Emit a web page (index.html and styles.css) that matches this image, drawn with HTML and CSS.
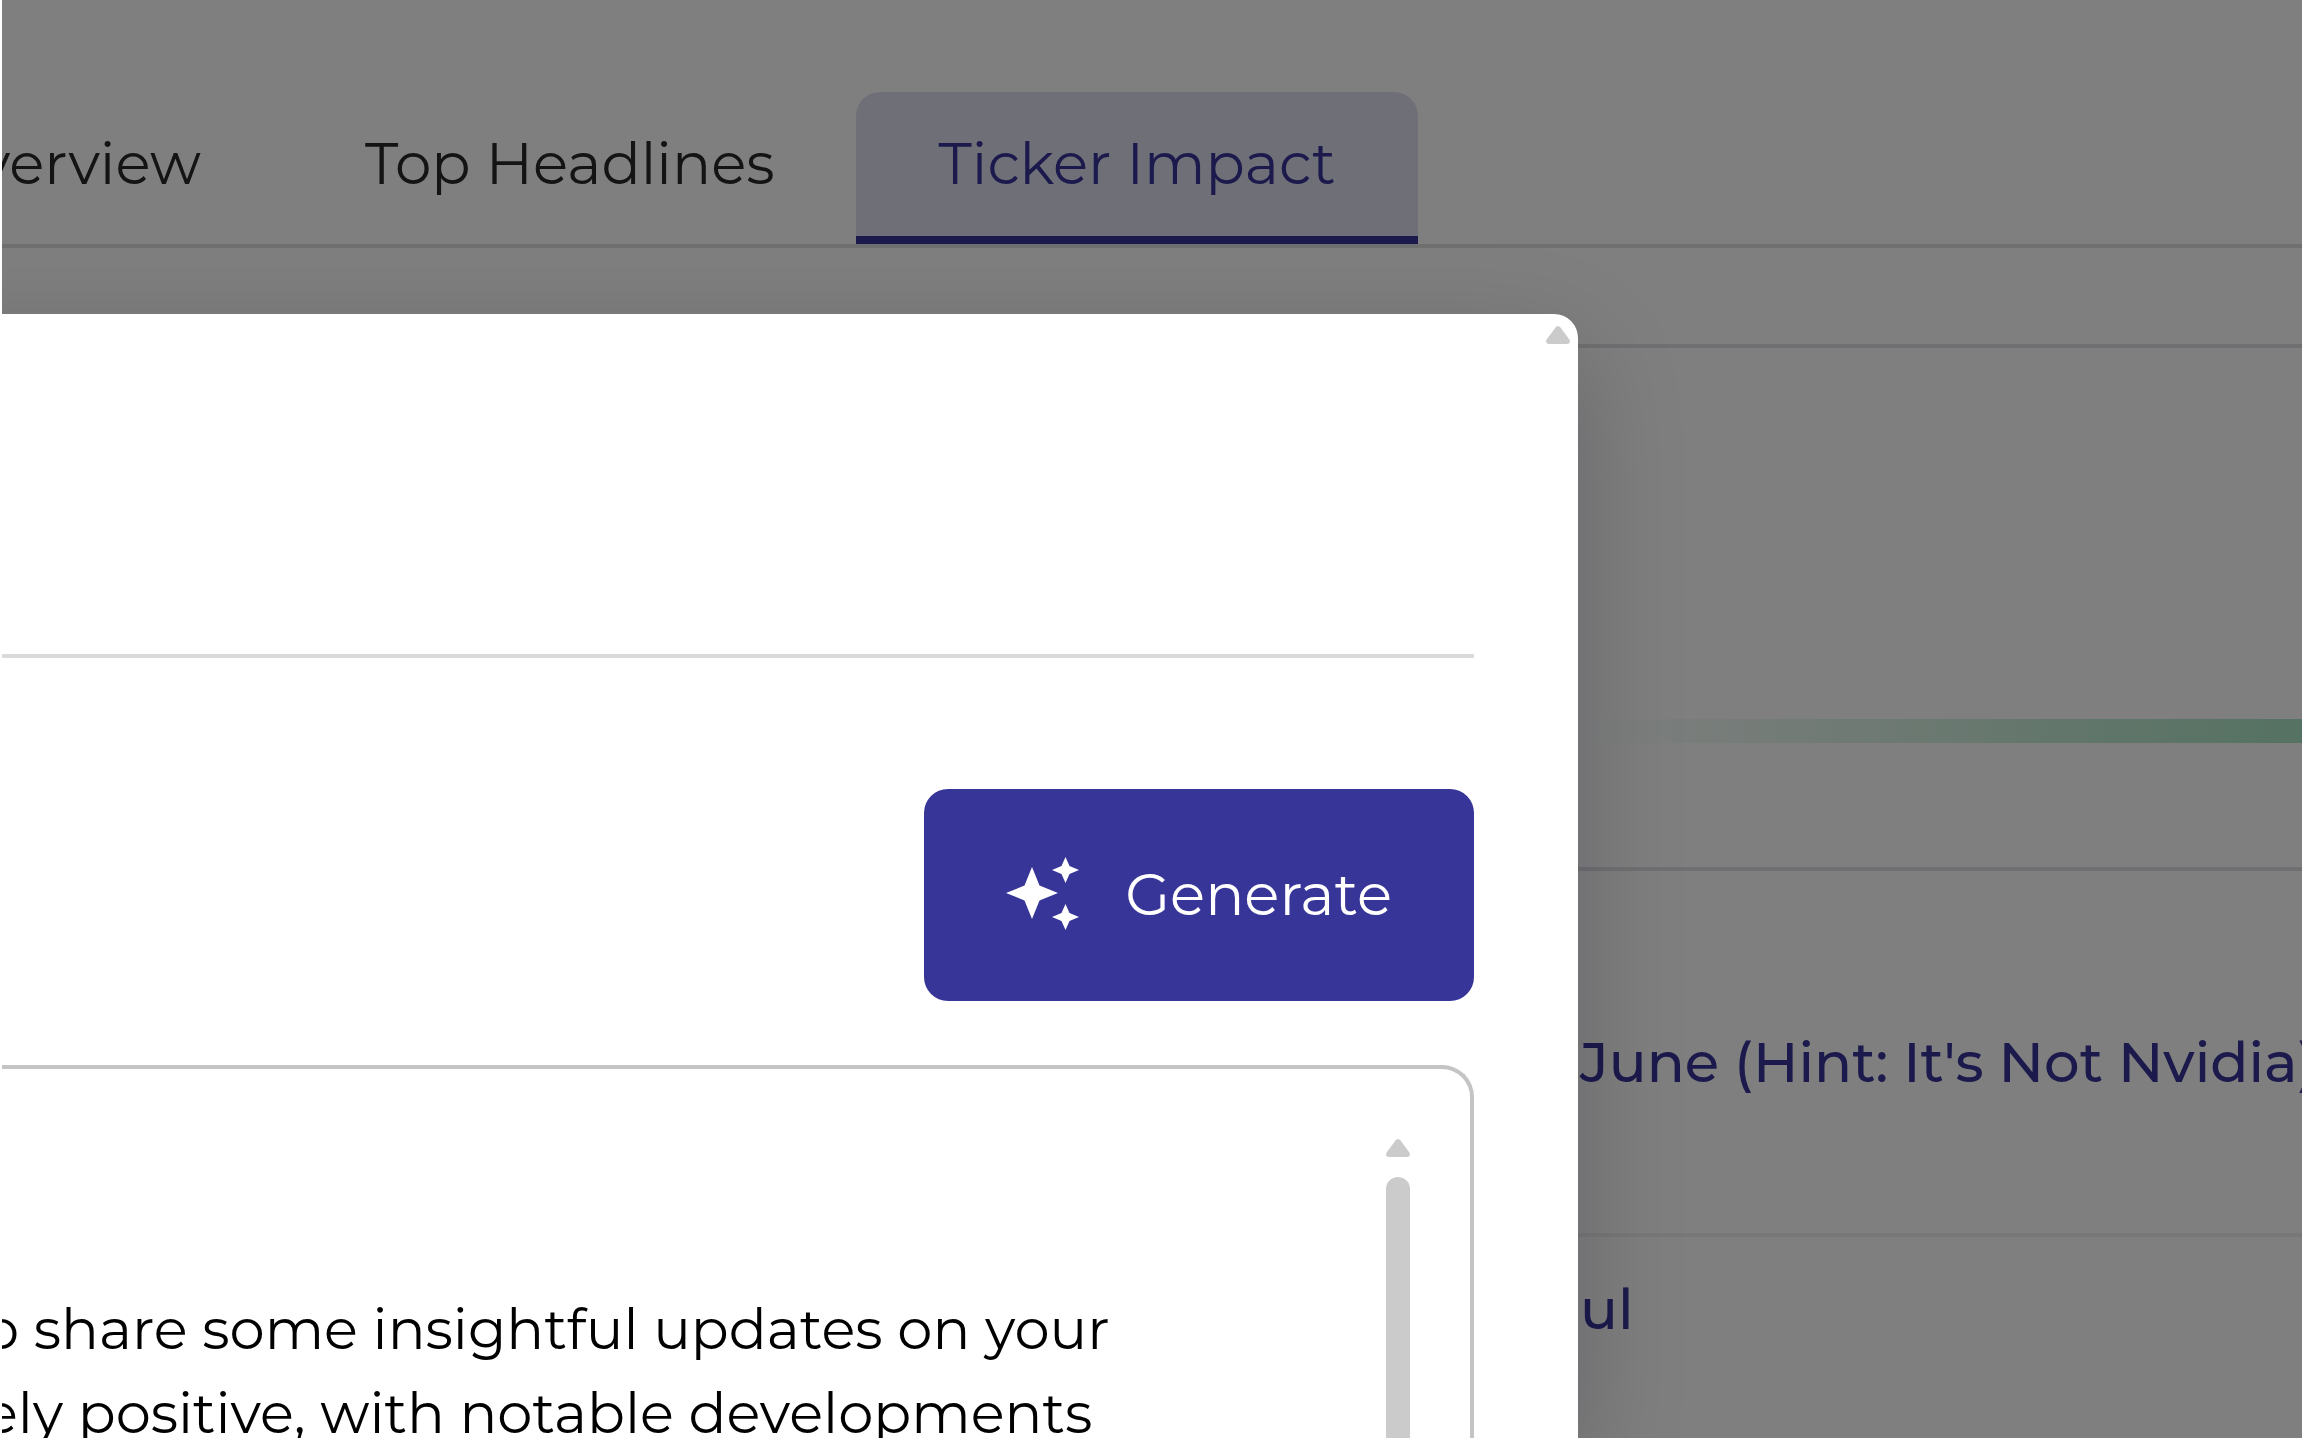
FILE: index.html
```html
<!DOCTYPE html>
<html lang="en">
  <head>
    <meta charset="UTF-8" />
    <meta name="viewport" content="width=device-width, initial-scale=1.0" />
    <title>Ticker Impact</title>
    <link rel="stylesheet" href="styles.css">
  </head>
  <body>
    <div class="app">
      <nav class="tabs">
        <button type="button" class="tab">Overview</button>
        <button type="button" class="tab">Top Headlines</button>
        <button type="button" class="tab active">Ticker Impact</button>
      </nav>

      <main class="panel">
        <div class="impact">
          <div class="impact-bar"></div>
        </div>
        <ul class="headlines">
          <li><a href="#">June (Hint: It's Not Nvidia)</a></li>
          <li><a href="#">ul</a></li>
        </ul>
      </main>

      <div class="backdrop">
        <section class="modal" role="dialog" aria-modal="true">
          <svg class="arrow modal-arrow" viewBox="0 0 24 18"><path d="M9.5 1.5Q12 -1.5 14.5 1.5L23.4 13.6Q25 17.6 21 18H3Q-1 17.6 .6 13.6Z"/></svg>

          <header class="modal-header"></header>

          <div class="actions">
            <button type="button" class="generate">
              <svg class="sparkles" viewBox="0 0 73 77">
                <path d="M26 10L33.5 28.5L52 36L33.5 43.5L26 62L18.5 43.5L0 36L18.5 28.5Z"/>
                <path d="M59.5 0L63.5 9L73 13L63.5 17L59.5 26L55.5 17L46 13L55.5 9Z"/>
                <path d="M59.5 47L63.5 56L73 60L63.5 64L59.5 73L55.5 64L46 60L55.5 56Z"/>
              </svg>
              Generate
            </button>
          </div>

          <div class="message">
            <p>o share some insightful updates on your<br>ely positive, with notable developments</p>
            <div class="scrollbar">
              <svg class="arrow" viewBox="0 0 24 18"><path d="M9.5 1.5Q12 -1.5 14.5 1.5L23.4 13.6Q25 17.6 21 18H3Q-1 17.6 .6 13.6Z"/></svg>
              <div class="thumb"></div>
            </div>
          </div>
        </section>
      </div>
    </div>
  </body>
</html>
```
FILE: styles.css
```css
* {
  box-sizing: border-box;
  margin: 0;
  padding: 0;
}

:root {
  --side: 724px;
  --primary: #383598;
}

body {
  background-color: #fff;
  font-family: Montserrat, Inter, sans-serif;
  font-size: 56px;
  line-height: 84px;
}

button {
  border: none;
  font: inherit;
  font-size: 58px;
  cursor: pointer;
}

.app {
  position: relative;
  height: calc(100vh - 2px);
  margin: 0 2px 2px;
  overflow: hidden;
}

/* tabs */
.tabs {
  display: flex;
  padding-top: 92px;
  margin-left: -154px;
  border-bottom: 4px solid #e0e0e0;
}

.tab {
  height: 152px;
  padding: 0 82px;
  background: none;
  border-bottom: 8px solid transparent;
  color: #292929;
  white-space: nowrap;
}

.tab.active {
  background-color: #dfdff0;
  border-bottom-color: var(--primary);
  border-radius: 24px 24px 0 0;
  color: var(--primary);
}

/* page behind the modal */
.panel {
  margin-top: 96px;
  border-top: 4px solid #e0e0e4;
}

.impact {
  padding: 371px 0 124px calc(100% - var(--side));
  border-bottom: 4px solid #e0e0e4;
}

.impact-bar {
  height: 24px;
  background: linear-gradient(to right, transparent, #aae4c4);
}

.headlines {
  list-style: none;
}

.headlines li {
  padding: 30px 0 30px calc(100% - 722px);
  white-space: nowrap;
}

.headlines li:first-child {
  padding-top: 149px;
  padding-bottom: 129px;
  border-bottom: 4px solid #f0f0f0;
}

.headlines a {
  color: var(--primary);
  font-weight: 500;
  text-decoration: none;
}

/* modal */
.backdrop {
  position: absolute;
  inset: 0;
  display: flex;
  padding: 314px var(--side) 0 0;
  background-color: rgba(0, 0, 0, 0.5);
}

.modal {
  position: relative;
  flex: 1;
  display: flex;
  flex-direction: column;
  margin-left: -200px;
  padding: 0 104px;
  background-color: #fff;
  border-radius: 24px 24px 0 0;
  box-shadow: 0 36px 110px rgba(10, 10, 24, 0.2);
}

.modal-header {
  flex: none;
  height: 344px;
  border-bottom: 4px solid #dadada;
}

.actions {
  display: flex;
  justify-content: flex-end;
  padding: 131px 0 64px;
}

.generate {
  display: flex;
  align-items: center;
  justify-content: space-between;
  width: 550px;
  height: 212px;
  padding: 0 82px;
  background-color: var(--primary);
  border-radius: 24px;
  color: #fff;
}

.sparkles {
  width: 73px;
  height: 77px;
  fill: #fff;
}

.message {
  flex: 1;
  display: flex;
  justify-content: space-between;
  min-height: 0;
  padding: 0 60px 0 74px;
  border: 4px solid #c4c4c4;
  border-bottom: none;
  border-radius: 32px 32px 0 0;
}

.message p {
  padding-top: 218px;
  color: #000;
  white-space: nowrap;
}

.scrollbar {
  display: flex;
  flex-direction: column;
  gap: 20px;
  padding-top: 70px;
}

.arrow {
  display: block;
  width: 24px;
  height: 18px;
  fill: #cbcbcb;
}

.modal-arrow {
  position: absolute;
  top: 12px;
  right: 8px;
}

.thumb {
  flex: 1;
  background-color: #cbcbcb;
  border-radius: 12px 12px 0 0;
}
```
